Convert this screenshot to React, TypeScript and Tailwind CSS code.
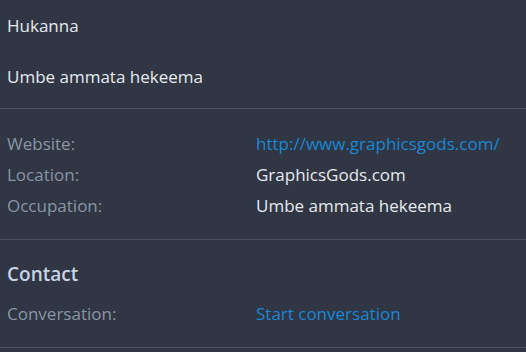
import React from "react";

const font = { fontFamily: '"Open Sans", "Noto Sans", sans-serif' };

export default function App() {
  return (
    <div className="w-[526px] h-[352px] bg-[#303643] overflow-hidden" style={font}>
      <div className="px-[7px] pt-[14px] pb-[19px] border-b border-[#4a505c] text-[17px] leading-6 text-[#e6eaf0]">
        <p>Hukanna</p>
        <p className="mt-[27px]">Umbe ammata hekeema</p>
      </div>
      <div className="px-[7px] pt-[23px] pb-[21px] border-b border-[#4a505c] text-[17px] leading-6 grid grid-cols-[249px_1fr] gap-y-[7px]">
        <span className="text-[#8a95a6]">Website:</span>
        <a className="text-[#1a88d6]">http://www.graphicsgods.com/</a>
        <span className="text-[#8a95a6]">Location:</span>
        <span className="text-[#e6eaf0]">GraphicsGods.com</span>
        <span className="text-[#8a95a6]">Occupation:</span>
        <span className="text-[#e6eaf0]">Umbe ammata hekeema</span>
      </div>
      <div className="px-[7px] pt-[21px] pb-[21px] border-b border-[#4a505c]">
        <h2 className="text-[19px] leading-[27px] font-semibold text-[#c8d4e4]">Contact</h2>
        <div className="mt-[14px] grid grid-cols-[249px_1fr] text-[17px] leading-6">
          <span className="text-[#8a95a6]">Conversation:</span>
          <a className="text-[#1a88d6]">Start conversation</a>
        </div>
      </div>
    </div>
  );
}
